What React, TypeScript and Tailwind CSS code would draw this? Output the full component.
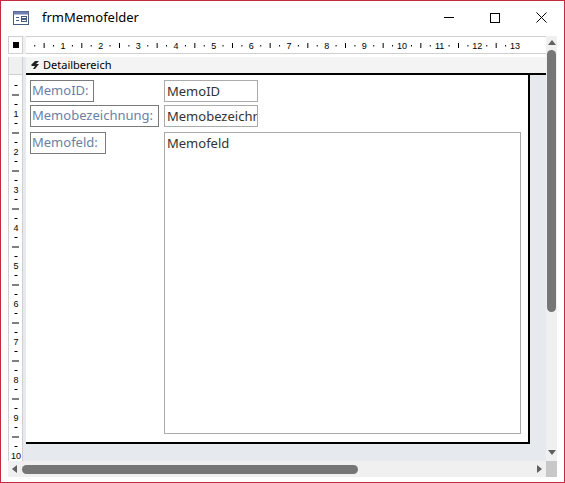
import React from "react";

const F = { fontFamily: '"Noto Sans","Open Sans",sans-serif' };

function HRuler() {
  const items: React.ReactNode[] = [];
  for (let i = 0; i < 56; i++) {
    const x = 25.3 + (37.67 * i) / 4;
    if (x > 520) break;
    const q = i % 4;
    if (q === 0) {
      if (i > 0)
        items.push(<text key={i} x={x} y={47} fontSize="9" textAnchor="middle" fill="#000" fontFamily="Liberation Sans, sans-serif">{i / 4}</text>);
    } else if (q === 2) items.push(<line key={i} x1={x} x2={x} y1={41} y2={46} stroke="#000" />);
    else items.push(<rect key={i} x={x - 0.5} y={43} width={1} height={1.5} fill="#000" />);
  }
  return (
    <svg width="520" height="18" viewBox="26 35 520 18" className="block">
      {items}
    </svg>
  );
}

function VRuler() {
  const items: React.ReactNode[] = [];
  for (let i = 1; i < 44; i++) {
    const y = 75 + (38 * i) / 4;
    if (y > 462) break;
    const q = i % 4;
    if (q === 0)
      items.push(<text key={i} x={7} y={y + 3} fontSize="9" textAnchor="middle" fill="#000" fontFamily="Liberation Sans, sans-serif">{i / 4}</text>);
    else if (q === 2) items.push(<line key={i} x1={3} x2={10} y1={y} y2={y} stroke="#000" />);
    else items.push(<line key={i} x1={5.5} x2={8.5} y1={y} y2={y} stroke="#000" />);
  }
  return (
    <svg width="14" height="390" viewBox="0 74 14 390" className="block">
      {items}
    </svg>
  );
}

export default function App() {
  return (
    <div className="w-[565px] h-[483px] bg-white border border-[#c42b3c] flex flex-col overflow-hidden" style={F}>
      <div className="h-[33px] flex items-center shrink-0">
        <svg width="16" height="14" viewBox="0 0 16 14" className="ml-[12px]">
          <rect x="0.5" y="0.5" width="15" height="13" fill="#fff" stroke="#4a5a80" />
          <rect x="0.5" y="0.5" width="15" height="3" fill="#6d7fb0" />
          <line x1="3" x2="6" y1="6.5" y2="6.5" stroke="#4a5a80" />
          <line x1="3" x2="6" y1="9.5" y2="9.5" stroke="#4a5a80" />
          <rect x="8.5" y="5.5" width="5" height="2" fill="none" stroke="#4a5a80" />
          <rect x="8.5" y="8.5" width="5" height="2" fill="none" stroke="#4a5a80" />
        </svg>
        <span className="ml-[13px] text-[13px] text-black">frmMemofelder</span>
        <div className="ml-auto flex items-center">
          <div className="w-[46px] h-[33px] flex items-center justify-center">
            <div className="w-[10px] h-px bg-black" />
          </div>
          <div className="w-[46px] h-[33px] flex items-center justify-center">
            <div className="w-[10px] h-[10px] border border-black" />
          </div>
          <div className="w-[46px] h-[33px] flex items-center justify-center">
            <svg width="11" height="11" viewBox="0 0 11 11"><path d="M0.5 0.5L10.5 10.5M10.5 0.5L0.5 10.5" stroke="#000" /></svg>
          </div>
        </div>
      </div>
      <div className="flex flex-1 min-h-0 px-[7px] pb-[5px] pt-[2px] bg-white">
        <div className="flex flex-col flex-1 min-h-0">
          <div className="flex h-[18px] shrink-0 bg-[#f0f0f0]">
            <div className="w-[15px] flex items-center justify-center bg-white border border-[#cfcfcf]">
              <div className="w-[6px] h-[6px] bg-black" />
            </div>
            <div className="w-[3px]" />
            <div className="flex-1 bg-white border-y border-[#cfcfcf] overflow-hidden"><HRuler /></div>
          </div>
          <div className="flex flex-1 min-h-0 pt-[3px] bg-white">
            <div className="w-[15px] flex flex-col border-x border-[#cfcfcf] bg-white">
              <div className="h-[18px] shrink-0 border-b border-[#cfcfcf] bg-[#f0f0f0]" />
              <div className="flex-1 overflow-hidden"><VRuler /></div>
            </div>
            <div className="w-[3px] bg-[#e6e9ee]" />
            <div className="flex-1 flex flex-col bg-[#e6e9ee] min-w-0 min-h-0">
              <div className="h-[18px] shrink-0 bg-[#f4f4f4] border-b-2 border-black flex items-center text-[11px] text-black pl-[4px] gap-[3px]">
                <svg width="10" height="10" viewBox="0 0 10 10"><path d="M1 5L5 1H9L6 4H9L5 9H3L5 6H2Z" fill="#222" /></svg>
                Detailbereich
              </div>
              <div className="w-[504px] flex-1 mb-[17px] bg-white border-r-2 border-b-2 border-black relative text-[13px]">
                <div className="absolute left-[4px] top-[5px] w-[64px] h-[22px] border border-[#7a7a7a] text-[#6b7fa8] px-[1px] leading-[19px]">MemoID:</div>
                <div className="absolute left-[4px] top-[30px] w-[129px] h-[22px] border border-[#7a7a7a] text-[#6b7fa8] px-[1px] leading-[19px] whitespace-nowrap">Memobezeichnung:</div>
                <div className="absolute left-[4px] top-[57px] w-[76px] h-[22px] border border-[#7a7a7a] text-[#6b7fa8] px-[1px] leading-[19px]">Memofeld:</div>
                <div className="absolute left-[138px] top-[5px] w-[94px] h-[22px] border border-[#ababab] text-[#333] px-[2px] leading-[20px]">MemoID</div>
                <div className="absolute left-[138px] top-[30px] w-[94px] h-[22px] border border-[#ababab] text-[#333] px-[2px] leading-[20px] overflow-hidden whitespace-nowrap">Memobezeichnung</div>
                <div className="absolute left-[138px] top-[57px] w-[357px] h-[302px] border border-[#ababab] text-[#333] px-[2px] leading-[20px]">Memofeld</div>
              </div>
            </div>
          </div>
          <div className="h-[16px] shrink-0 flex items-center bg-[#f0f0f0]">
            <svg width="10" height="10" viewBox="0 0 10 10" className="ml-[2px]"><path d="M7 1L2 5L7 9Z" fill="#606060" /></svg>
            <div className="ml-[2px] w-[336px] h-[9px] rounded-full bg-[#767676]" />
            <div className="flex-1" />
            <svg width="10" height="10" viewBox="0 0 10 10" className="mr-[2px]"><path d="M3 1L8 5L3 9Z" fill="#606060" /></svg>
          </div>
        </div>
        <div className="w-[16px] flex flex-col bg-[#f0f0f0]">
          <div className="flex-1 flex flex-col items-center pt-[2px]">
            <svg width="10" height="10" viewBox="0 0 10 10"><path d="M1 7L5 2L9 7Z" fill="#606060" /></svg>
            <div className="mt-[2px] w-[9px] h-[262px] rounded-full bg-[#767676]" />
            <div className="flex-1" />
            <svg width="10" height="10" viewBox="0 0 10 10" className="mb-[4px]"><path d="M1 3L5 8L9 3Z" fill="#606060" /></svg>
          </div>
          <div className="h-[16px] bg-[#c8c8c8]" />
        </div>
      </div>
    </div>
  );
}
